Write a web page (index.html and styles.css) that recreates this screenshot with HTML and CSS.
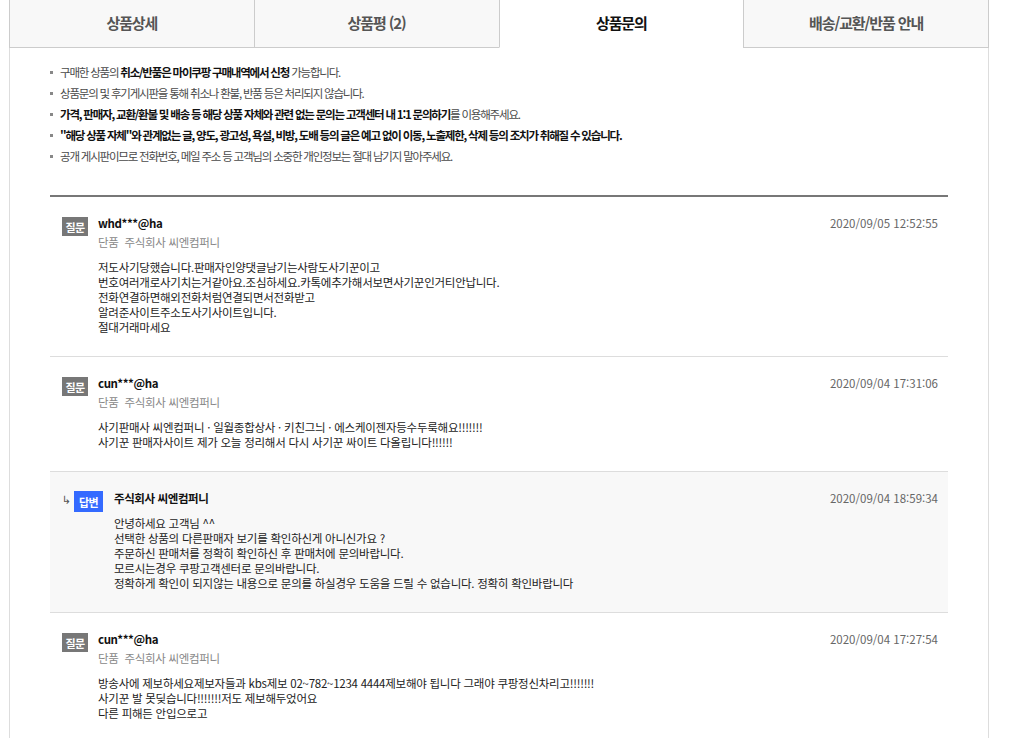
FILE: index.html
```html
<!DOCTYPE html>
<html lang="ko">
<head>
<meta charset="utf-8">
<title>상품문의</title>
<link rel="stylesheet" href="styles.css">
</head>
<body>
<div class="wrap">
  <ul class="tabs">
    <li class="tab">상품상세</li>
    <li class="tab">상품평 (2)</li>
    <li class="tab active">상품문의</li>
    <li class="tab last">배송/교환/반품 안내</li>
  </ul>
  <div class="panel">
    <ul class="notice">
      <li>구매한 상품의 <b>취소/반품은 마이쿠팡 구매내역에서 신청</b> 가능합니다.</li>
      <li>상품문의 및 후기게시판을 통해 취소나 환불, 반품 등은 처리되지 않습니다.</li>
      <li><b>가격, 판매자, 교환/환불 및 배송 등 해당 상품 자체와 관련 없는 문의는 고객센터 내 1:1 문의하기</b>를 이용해주세요.</li>
      <li><b>"해당 상품 자체"와 관계없는 글, 양도, 광고성, 욕설, 비방, 도배 등의 글은 예고 없이 이동, 노출제한, 삭제 등의 조치가 취해질 수 있습니다.</b></li>
      <li>공개 게시판이므로 전화번호, 메일 주소 등 고객님의 소중한 개인정보는 절대 남기지 말아주세요.</li>
    </ul>

    <div class="qna">
      <div class="item">
        <span class="badge q">질문</span>
        <div class="main">
          <div class="head"><strong class="user">whd***@ha</strong><span class="date">2020/09/05 12:52:55</span></div>
          <div class="sub">단품&nbsp;&nbsp;주식회사 씨엔컴퍼니</div>
          <p class="body">저도사기당했습니다.판매자인양댓글남기는사람도사기꾼이고<br>번호여러개로사기치는거같아요.조심하세요.카톡에추가해서보면사기꾼인거티안납니다.<br>전화연결하면해외전화처럼연결되면서전화받고<br>알려준사이트주소도사기사이트입니다.<br>절대거래마세요</p>
        </div>
      </div>

      <div class="item">
        <span class="badge q">질문</span>
        <div class="main">
          <div class="head"><strong class="user">cun***@ha</strong><span class="date">2020/09/04 17:31:06</span></div>
          <div class="sub">단품&nbsp;&nbsp;주식회사 씨엔컴퍼니</div>
          <p class="body">사기판매사 씨엔컴퍼니 · 일월종합상사 · 키친그늬 · 에스케이젠자등수두룩해요!!!!!!!<br>사기꾼 판매자사이트 제가 오늘 정리해서 다시 사기꾼 싸이트 다올립니다!!!!!!</p>
        </div>
      </div>

      <div class="item answer">
        <span class="arrow">↳</span>
        <span class="badge a">답변</span>
        <div class="main">
          <div class="head"><strong class="user">주식회사 씨엔컴퍼니</strong><span class="date">2020/09/04 18:59:34</span></div>
          <p class="body">안녕하세요 고객님 ^^<br>선택한 상품의 다른판매자 보기를 확인하신게 아니신가요 ?<br>주문하신 판매처를 정확히 확인하신 후 판매처에 문의바랍니다.<br>모르시는경우 쿠팡고객센터로 문의바랍니다.<br>정확하게 확인이 되지않는 내용으로 문의를 하실경우 도움을 드릴 수 없습니다. 정확히 확인바랍니다</p>
        </div>
      </div>

      <div class="item">
        <span class="badge q">질문</span>
        <div class="main">
          <div class="head"><strong class="user">cun***@ha</strong><span class="date">2020/09/04 17:27:54</span></div>
          <div class="sub">단품&nbsp;&nbsp;주식회사 씨엔컴퍼니</div>
          <p class="body">방송사에 제보하세요제보자들과 kbs제보 02~782~1234 4444제보해야 됩니다 그래야 쿠팡정신차리고!!!!!!!<br>사기꾼 발 못딪습니다!!!!!!!저도 제보해두었어요<br>다른 피해든 안입으로고</p>
        </div>
      </div>
    </div>
  </div>
</div>
</body>
</html>
```

FILE: styles.css
```css
* { box-sizing: border-box; }
html, body { margin: 0; padding: 0; background: #fff; }
body {
  font-family: "Noto Sans CJK KR", "Noto Sans", sans-serif;
  color: #222;
}
.wrap {
  width: 980px;
  margin-left: 9px;
}
.tabs {
  display: flex;
  list-style: none;
  margin: 0;
  padding: 0;
}
.tab {
  flex: 1;
  height: 48px;
  display: flex;
  align-items: center;
  justify-content: center;
  background: #f8f8f8;
  border-left: 1px solid #ccc;
  border-bottom: 1px solid #ccc;
  font-size: 15px;
  font-weight: bold;
  letter-spacing: -1.1px;
  color: #555;
  padding-bottom: 3px;
}
.tab.last { border-right: 1px solid #ccc; }
.tab.active {
  background: #fff;
  border-bottom-color: transparent;
  color: #111;
}

.panel {
  border-left: 1px solid #ddd;
  border-right: 1px solid #ddd;
  padding: 14px 40px 0 40px;
}
.notice {
  list-style: none;
  margin: 0 0 28px 0;
  padding: 0;
}
.notice li {
  position: relative;
  padding-left: 10px;
  font-size: 11.5px;
  letter-spacing: -1.2px;
  line-height: 21px;
  color: #4a4a4a;
}
.notice li::before {
  content: "";
  position: absolute;
  left: 0;
  top: 9px;
  width: 3px;
  height: 3px;
  background: #888;
}
.notice b { color: #111; font-weight: bold; }

.qna { border-top: 2px solid #777; }
.item {
  display: flex;
  align-items: flex-start;
  gap: 10px;
  padding: 19px 10px 21px 12px;
  border-top: 1px solid #ddd;
}
.item:first-child { border-top: 0; }
.item.answer {
  background: #f8f8f8;
  gap: 0;
}
.badge {
  flex: none;
  display: flex;
  align-items: center;
  justify-content: center;
  color: #fff;
  font-size: 11px;
  font-weight: bold;
  letter-spacing: -0.5px;
  margin-top: 1px;
}
.badge.q {
  width: 26px;
  height: 19px;
  background: #777;
}
.badge.a {
  width: 29px;
  height: 21px;
  background: #346aff;
  margin-top: 0;
  margin-right: 11px;
}
.arrow {
  flex: none;
  width: 12px;
  font-family: "DejaVu Sans", sans-serif;
  font-size: 11px;
  line-height: 14px;
  color: #555;
  margin-top: 3px;
}
.main { flex: 1; min-width: 0; }
.head {
  display: flex;
  justify-content: space-between;
  align-items: center;
  height: 14px;
}
.user {
  font-size: 11.5px;
  font-weight: bold;
  letter-spacing: -0.4px;
  color: #111;
}
.date {
  font-size: 11.5px;
  color: #666;
  letter-spacing: 0;
}
.sub {
  margin-top: 5px;
  line-height: 14px;
  font-size: 11.5px;
  letter-spacing: -0.3px;
  color: #888;
}
.body {
  margin: 11px 0 0 0;
  font-size: 11.5px;
  letter-spacing: -0.25px;
  line-height: 15px;
  color: #222;
}
```
